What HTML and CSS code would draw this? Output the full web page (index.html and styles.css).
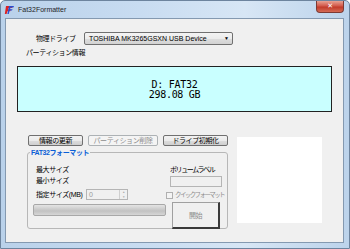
FILE: index.html
```html
<!DOCTYPE html>
<html lang="ja">
<head>
    <meta charset="UTF-8">
    <title>Fat32Formatter</title>
    <link rel="stylesheet" href="styles.css">
</head>
<body>
    <div class="window">
        <div class="titlebar">
            <svg class="app-icon" width="11" height="10" viewBox="0 0 11 10">
                <path d="M2 1h7l-1 2H4.5L4 4.5h3l-.8 1.8H3.4L2.6 9H.8z" fill="#d22"/>
                <path d="M5 1h5l-.6 1.4H6.6L6 4.2h2.6L8 5.6H5.6L4.8 9H3.4z" fill="#2a4fd0"/>
            </svg>
            <span class="title">Fat32Formatter</span>
            <div class="close">&#x2715;</div>
        </div>
        <div class="client">
            <div class="drive-row">
                <span class="drive-label">物理ドライブ</span>
                <div class="select">
                    <span>TOSHIBA MK3265GSXN USB Device</span>
                    <span class="arrow">&#9660;</span>
                </div>
            </div>
            <div class="part-label">パーティション情報</div>
            <div class="info">
                <div>D: FAT32</div>
                <div>298.08 GB</div>
            </div>
            <div class="lower">
                <div class="left-col">
                    <div class="buttons">
                        <div class="btn w55">情報の更新</div>
                        <div class="btn w70 disabled">パーティション削除</div>
                        <div class="btn w65">ドライブ初期化</div>
                    </div>
                    <div class="group">
                        <span class="group-title">FAT32フォーマット</span>
                        <div class="row r1">
                            <div class="cell-left"><span class="lbl">最大サイズ</span></div>
                            <div class="cell-right"><span class="lbl">ボリュームラベル</span></div>
                        </div>
                        <div class="row r2">
                            <div class="cell-left"><span class="lbl">最小サイズ</span></div>
                            <div class="cell-right"><div class="textbox"></div></div>
                        </div>
                        <div class="row r3">
                            <div class="cell-left">
                                <span class="lbl size-lbl">指定サイズ(MB)</span>
                                <div class="numeric">
                                    <span>0</span>
                                    <div class="spin"><span>&#9650;</span><span>&#9660;</span></div>
                                </div>
                            </div>
                            <div class="cell-right">
                                <span class="check"></span>
                                <span class="check-lbl">クイックフォーマット</span>
                            </div>
                        </div>
                        <div class="row r4">
                            <div class="cell-left"><div class="progress"></div></div>
                            <div class="cell-right"><div class="start">開始</div></div>
                        </div>
                    </div>
                </div>
                <div class="white-box"></div>
            </div>
        </div>
    </div>
</body>
</html>
```

FILE: styles.css
```css
body {
    margin: 0;
    font-family: 'Liberation Sans', 'Noto Sans CJK JP', sans-serif;
    font-size: 7px;
    line-height: 9px;
    letter-spacing: -0.4px;
    color: #000;
}

.window {
    width: 350px;
    height: 249px;
    box-sizing: border-box;
    background: linear-gradient(90deg, #b9d1ea 0%, #c8dcf1 40%, #d7e6f5 70%, #bcd3eb 100%);
    border: 1px solid #6d849e;
    border-radius: 5px 5px 0 0;
    display: flex;
    flex-direction: column;
}

.titlebar {
    height: 17px;
    display: flex;
    align-items: flex-start;
    padding-left: 3px;
}
.app-icon {
    margin-top: 4px;
}
.title {
    margin: 4px 0 0 3px;
    font-size: 7px;
    letter-spacing: 0;
    color: #1e1e1e;
}
.close {
    margin-left: auto;
    margin-right: 5px;
    width: 28px;
    height: 12px;
    box-sizing: border-box;
    border: 1px solid #7d3a33;
    border-top: none;
    border-radius: 0 0 4px 4px;
    background: linear-gradient(#e8a293, #d2594a 45%, #c23b2a 55%, #d46b55);
    color: #fff;
    font-family: 'DejaVu Sans', sans-serif;
    font-size: 7px;
    font-weight: bold;
    line-height: 11px;
    text-align: center;
}

.client {
    margin: 0 5px 5px 4px;
    flex: 1;
    background: #f0f0f0;
    border: 1px solid #8499b0;
}

.drive-row {
    display: flex;
    align-items: center;
    margin: 13px 0 0 30px;
}
.drive-label {
    width: 48px;
}
.select {
    width: 149px;
    height: 13px;
    box-sizing: border-box;
    border: 1px solid #707070;
    border-radius: 2px;
    background: linear-gradient(#f4f4f4, #ececec 50%, #dedede 51%, #d2d2d2);
    display: flex;
    align-items: center;
    padding: 0 3px 0 4px;
    font-size: 7px;
    letter-spacing: 0;
}
.arrow {
    margin-left: auto;
    font-size: 5px;
}

.part-label {
    margin: 3px 0 0 20px;
}

.info {
    margin: 9px 0 0 11px;
    width: 315px;
    height: 46px;
    box-sizing: border-box;
    border: 1px solid #222;
    background: #c9ffff;
    display: flex;
    flex-direction: column;
    justify-content: center;
    align-items: center;
    font-family: 'DejaVu Sans Mono', monospace;
    font-size: 10px;
    line-height: 10px;
    letter-spacing: -0.3px;
    padding-top: 2px;
}

.lower {
    display: flex;
    margin: 23px 0 0 21px;
}
.left-col {
    width: 201px;
}
.buttons {
    display: flex;
    gap: 5px;
    margin-left: 1px;
}
.btn {
    height: 11px;
    box-sizing: border-box;
    border: 1px solid #707070;
    border-radius: 2px;
    background: linear-gradient(#f2f2f2, #ebebeb 50%, #dddddd 51%, #cfcfcf);
    text-align: center;
    line-height: 9px;
}
.btn.disabled {
    border-color: #adb2b5;
    background: #f4f4f4;
    color: #8d8d8d;
}
.w55 { width: 55px; }
.w70 { width: 70px; }
.w65 { width: 65px; }

.group {
    margin-top: 6px;
    height: 77px;
    box-sizing: border-box;
    border: 1px solid #b7b7b7;
    border-radius: 3px;
    padding: 0 0 0 5px;
}
.group-title {
    display: inline-block;
    margin: -5px 0 0 -3px;
    padding: 0 1px;
    background: #f0f0f0;
    color: #0a5fd6;
    font-weight: bold;
    vertical-align: top;
}
.row {
    display: flex;
}
.cell-left {
    width: 133px;
    display: flex;
    align-items: flex-start;
}
.cell-right {
    width: 56px;
    display: flex;
    align-items: flex-start;
    white-space: nowrap;
}
.lbl {
    margin-left: 3px;
}
.r1 {
    margin-top: 3px;
    height: 10px;
}
.r1 .cell-right .lbl {
    margin-left: 4px;
    letter-spacing: -1.4px;
}
.r2 .cell-right {
    padding-left: 4px;
    box-sizing: border-box;
}
.r2 {
    height: 13px;
}
.r2 .lbl {
    margin-top: 1px;
}
.textbox {
    margin-top: 1px;
    width: 52px;
    height: 11px;
    box-sizing: border-box;
    border: 1px solid #b5b5b5;
    background: #f0f0f0;
}
.r3 {
    height: 14px;
}
.size-lbl {
    width: 50px;
    margin-top: 2px;
}
.numeric {
    margin-top: 1px;
    width: 42px;
    height: 11px;
    box-sizing: border-box;
    border: 1px solid #b5b5b5;
    background: #f0f0f0;
    color: #999;
    display: flex;
    padding-left: 2px;
    line-height: 9px;
}
.spin {
    margin-left: auto;
    width: 7px;
    display: flex;
    flex-direction: column;
    border-left: 1px solid #cfcfcf;
    font-size: 3px;
    line-height: 4.5px;
    text-align: center;
    color: #aaa;
}
.check {
    margin-top: 4px;
    flex-shrink: 0;
    width: 7px;
    height: 7px;
    box-sizing: border-box;
    border: 1px solid #b0b0b0;
    background: #f4f4f4;
}
.check-lbl {
    margin: 2px 0 0 2px;
    color: #8d8d8d;
    font-size: 6.5px;
    letter-spacing: -1.6px;
}
.r4 {
    height: 28px;
}
.progress {
    margin-top: 2px;
    width: 133px;
    height: 12px;
    box-sizing: border-box;
    border: 1px solid #a8a8a8;
    border-radius: 2px;
    background: linear-gradient(#e4e4e4, #cdcdcd 40%, #c2c2c2 60%, #d6d6d6);
}
.start {
    margin-left: 6px;
    width: 48px;
    height: 27px;
    box-sizing: border-box;
    border: 1px solid #a0a0a0;
    border-right: 2px solid #3a3a3a;
    border-bottom: 2px solid #3a3a3a;
    background: #f0f0f0;
    color: #8d8d8d;
    display: flex;
    align-items: center;
    justify-content: center;
}

.white-box {
    margin: 2px 0 0 9px;
    width: 85px;
    height: 86px;
    background: #fff;
}
```
